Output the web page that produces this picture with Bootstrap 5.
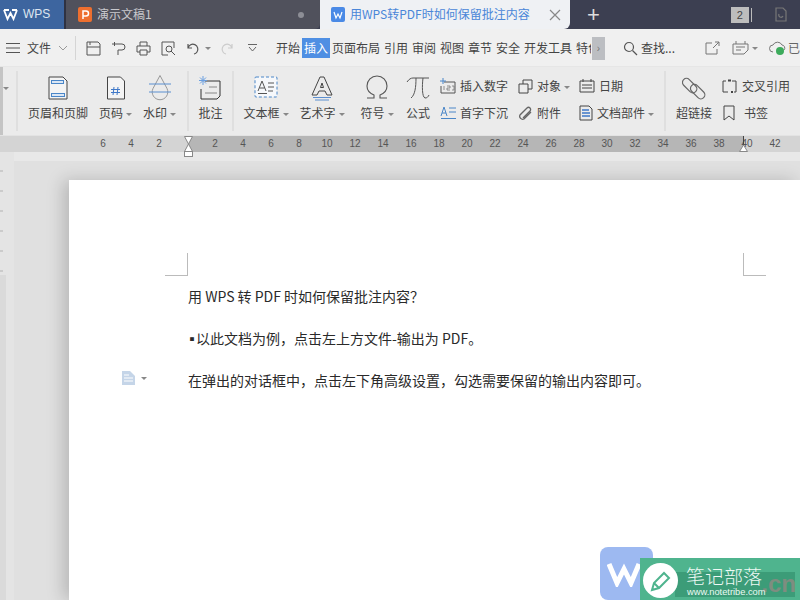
<!DOCTYPE html>
<html lang="zh">
<head>
<meta charset="utf-8">
<title>WPS</title>
<link href="https://cdn.jsdelivr.net/npm/bootstrap@5.3.0/dist/css/bootstrap.min.css" rel="stylesheet">
<style>
html,body{height:100%;overflow:hidden}
body{width:800px;height:600px;background:#e3e3e3;font-family:"Noto Sans CJK SC","Liberation Sans",sans-serif;font-size:12px;color:#444;line-height:1.2;position:relative}
svg{display:block;flex:none}
.tabbar{height:29px;background:#3c3f51;color:#d5d7de}
.tb-wps{width:64px;background:#3d659f;gap:5px;padding-left:3px;font-family:"Liberation Sans",sans-serif;font-size:12px;color:#dde5f0}
.tb-gap{width:2px;background:#2f3242}
.tb-doc{width:254px;background:#50515c;border-radius:0 0 5px 0;padding:0 16px 0 12px;gap:5px;color:#c8c8cc}
.tb-dot{width:6px;height:6px;background:#8d8e96;border-radius:50%}
.tb-active{width:250px;background:#eff1f4;color:#4a86d8;border-radius:0 0 6px 0;padding:0 9px 0 11px;gap:5px}
.tb-plus{color:#ddd;font-family:"Liberation Sans",sans-serif;font-size:22px;font-weight:400;padding-left:17px;line-height:1}
.tb-count{width:18px;height:16px;background:#bdbdbd;color:#444;font-family:"Liberation Sans",sans-serif;font-size:11px;text-align:center;line-height:16px;margin-left:131px;box-shadow:3px 0 0 -1px #3c3f51,4px 0 0 -1px #bbb}
.tb-r{margin-left:25px}
.menu{height:38px;background:#f0f0f0;padding:1px 0 0 6px;border-bottom:1px solid #e6e6e6}
.menu-file{gap:7px;width:70px;color:#444;padding-right:3px}
.menu-sep{width:1px;height:24px;background:#d5d5d5}
.qa{gap:10px;padding-left:10px;width:202px}
.qa .mi-cr{margin-left:-4px}
.qa .mi-ch{margin-left:4px}
.mi{gap:4px;color:#444}
.mi span{white-space:nowrap}
.mi-on{background:#4f8fe3;color:#fff;padding:3px 2px;margin:0 -2px}
.mi-clip{width:15px;overflow:hidden;white-space:nowrap}
.mi-more{width:13px;height:23px;background:#bcbec2;color:#777;font-family:"Liberation Sans",sans-serif;font-size:10px;text-align:center;line-height:23px;margin-left:1px}
.find{gap:3px;padding-left:18px;width:101px}
.mr{gap:12px;color:#666}
.mr-cl{margin-left:-1px}
.mr-t{margin-left:-10px}
.ribbon{height:68px;background:#ebebeb;box-shadow:inset 3px 0 0 #c4c4c4}
.rs{height:60px;margin-top:4px;border-right:2px solid #dfdfdf;gap:0}
.rs0{width:18px}
.rs1{width:171px;padding-left:9px}
.rs2{width:45px;justify-content:center}
.rs3{width:432px;padding-left:9px}
.rs4{width:134px;padding-left:9px;border-right:0}
.big{display:flex;flex-direction:column;align-items:center;height:60px;white-space:nowrap;padding-top:3px}
.big svg{height:28px;margin-bottom:4px}
.w-a{width:62px}.w-b{width:35px;margin-left:9px}.w-c{width:35px;margin-left:9px}
.w-d{width:46px}.w-e{width:46px;margin-left:10px}.w-f{width:40px;margin-left:12px}.w-g{width:26px;margin-left:8px}
.w-h{width:38px}
.two{display:flex;flex-direction:column;gap:7px;padding-top:5px;height:60px}
.two>div{display:flex;align-items:center;gap:4px;height:20px;white-space:nowrap}
.c1{width:78px;margin-left:9px}.c2{width:61px}.c3{width:80px}.c4{width:70px;margin-left:9px}
.caret{display:inline-block;width:0;height:0;border:3px solid transparent;border-top:3px solid #888;border-bottom:0;margin-left:3px;vertical-align:middle}
.ruler{height:16px;background:linear-gradient(90deg,#d4d4d4 189px,#b6b6b6 189px,#b6b6b6 744px,#d4d4d4 744px);padding-left:89px;position:relative;z-index:1;font-family:"Liberation Sans",sans-serif;font-size:10px;color:#555;margin-top:1px}
.ruler span{width:28px;flex:none;text-align:center;line-height:15px}
.m1{position:absolute;left:184px;top:0}
.m2{position:absolute;left:739px;top:0}
.work{height:448px;position:relative;padding:28px 0 0 69px;background:linear-gradient(#e0e0e0,#e0e0e0) 14px 9px no-repeat,#e8e8e8}
.vr{position:absolute;left:0;top:0;bottom:0;width:14px;background:linear-gradient(#b4b4b4,#b4b4b4) 0 123px/6px 100% no-repeat,repeating-linear-gradient(180deg,transparent 0 18px,#777 18px 20px) 0 0/3px 123px no-repeat,#dcdcdc;border-right:0}
.sheet{width:731px;height:420px;background:#fff;box-shadow:-6px 0 16px rgba(0,0,0,.18);padding:73px 0 0 119px;font-size:14px;color:#2a2a2a;position:relative}
.crn{height:23px;width:23px;margin-left:-23px;border-right:1px solid #bbb;border-bottom:1px solid #bbb;margin-bottom:9px}
.crn2{position:absolute;left:674px;top:73px;width:23px;height:23px;border-left:1px solid #bbb;border-bottom:1px solid #bbb}
.para{height:42px;line-height:22px;white-space:nowrap}
.blt{margin-left:-3px;margin-right:-3px}
.note{position:absolute;left:53px;top:191px;gap:6px}
.wm{position:absolute;right:0;bottom:0;width:200px;height:53px}
.wm-logo{position:absolute;left:0;top:0;width:53px;height:53px;background:#9db9f1;border-radius:8px;padding:0 12px 0 6px}
.wm-bar{position:absolute;left:40px;top:11px;width:160px;height:42px;background:#4fb48e;color:#fff}
.wm-circle{position:absolute;left:3px;top:5px;width:35px;height:35px;background:#fff;border-radius:50%}
.wm-band{position:absolute;left:35px;top:14px;width:120px;height:25px;background:#3c9c78}
.wm-cn{position:absolute;right:4px;top:13px;font-family:"Liberation Sans",sans-serif;font-size:24px;line-height:26px;color:#7e8d80;font-weight:700}
.wm-t{position:absolute;left:46px;top:8px;font-size:19px;line-height:19px;font-weight:300;color:#eef9f4;white-space:nowrap}
.wm-u{position:absolute;left:47px;top:29px;font-family:"Liberation Sans",sans-serif;font-size:9.300px;line-height:10px;color:#eafaf3;white-space:nowrap}
</style>
</head>
<body>
<div class="tabbar d-flex align-items-stretch">
  <div class="tb-wps d-flex align-items-center">
    <svg width="15" height="12" viewBox="0 0 15 12" fill="none" stroke="#fff" stroke-width="1.800"><path d="M1 1l3.500 9 3-6 3 6L14 1M1 1h5M9 1h5"/></svg>
    <span>WPS</span>
  </div>
  <div class="tb-gap"></div>
  <div class="tb-doc d-flex align-items-center">
    <svg width="14" height="15" viewBox="0 0 14 15"><rect width="14" height="15" rx="2" fill="#ee6f2f"/><path d="M5 12V4h3a2 2 0 010 5H5" fill="none" stroke="#fff" stroke-width="1.500"/></svg>
    <span class="flex-grow-1">演示文稿1</span>
    <i class="tb-dot"></i>
  </div>
  <div class="tb-active d-flex align-items-center">
    <svg width="14" height="15" viewBox="0 0 14 15"><rect width="14" height="15" rx="2" fill="#4a8ae6"/><path d="M3 5l2 6 2-4 2 4 2-6" fill="none" stroke="#fff" stroke-width="1.200"/></svg>
    <span class="flex-grow-1 text-nowrap">用WPS转PDF时如何保留批注内容</span>
    <svg width="12" height="12" viewBox="0 0 12 12" stroke="#888" stroke-width="1.200"><path d="M1 1l10 10M11 1L1 11"/></svg>
  </div>
  <div class="d-flex align-items-center">
    <span class="tb-plus">+</span>
    <span class="tb-count">2</span>
    <svg class="tb-r" width="14" height="15" viewBox="0 0 14 15" fill="none" stroke="#777" stroke-width="1.200"><path d="M2 1h7l3 3v10H2zM5 7a2 2 0 104 2"/></svg>
  </div>
</div>

<div class="menu d-flex align-items-center">
  <div class="menu-file d-flex align-items-center">
    <svg width="14" height="10" viewBox="0 0 14 10" stroke="#555"><path d="M0 .5h14M0 5h14M0 9.500h14"/></svg>
    <span>文件</span>
    <svg width="10" height="6" viewBox="0 0 10 6" fill="none" stroke="#999"><path d="M1 1l4 4 4-4"/></svg>
  </div>
  <div class="menu-sep"></div>
  <div class="qa d-flex align-items-center">
    <svg width="15" height="15" viewBox="0 0 15 15" fill="none" stroke="#555"><path d="M1 1h11l2 2v11H1zM1 6h13M4 1v3"/></svg>
    <svg width="15" height="15" viewBox="0 0 15 15" fill="none" stroke="#555"><path d="M1 3h5M3.500 1v4M6 3h5a3 3 0 010 6H7v5"/></svg>
    <svg width="15" height="15" viewBox="0 0 15 15" fill="none" stroke="#555"><path d="M4 5V1h7v4M4 11H1V5h13v6h-3M4 9h7v5H4z"/></svg>
    <svg width="15" height="15" viewBox="0 0 15 15" fill="none" stroke="#555"><path d="M13 7V1H1v13h6"/><circle cx="8" cy="8" r="3"/><path d="M10 10l4 4"/></svg>
    <svg width="13" height="13" viewBox="0 0 13 13" fill="none" stroke="#555" stroke-width="1.200"><path d="M2 2v4h4M2 6a5 5 0 119 4 5 5 0 01-3 2"/></svg>
    <i class="caret mi-cr"></i>
    <svg width="13" height="13" viewBox="0 0 13 13" fill="none" stroke="#ccc" stroke-width="1.200"><path d="M11 2v4H7M11 6a5 5 0 10-9 4 5 5 0 003 2"/></svg>
    <svg class="mi-ch" width="9" height="8" viewBox="0 0 9 8" fill="none" stroke="#666"><path d="M0 .5h9M1 3l3.500 4L8 3"/></svg>
  </div>
  <div class="mi d-flex align-items-center">
    <span>开始</span><span class="mi-on">插入</span><span>页面布局</span><span>引用</span><span>审阅</span><span>视图</span><span>章节</span><span>安全</span><span>开发工具</span><span class="mi-clip">特色</span>
  </div>
  <div class="mi-more">›</div>
  <div class="find d-flex align-items-center">
    <svg width="15" height="15" viewBox="0 0 15 15" fill="none" stroke="#555" stroke-width="1.200"><circle cx="6" cy="6" r="4.500"/><path d="M9.500 9.500L14 14"/></svg>
    <span class="text-nowrap">查找...</span>
  </div>
  <div class="mr d-flex align-items-center">
    <svg width="15" height="14" viewBox="0 0 15 14" fill="none" stroke="#777"><path d="M7 2H1v11h11V8M8 7l6-6M10 1h4v4"/></svg>
    <div class="d-flex align-items-center"><svg width="17" height="14" viewBox="0 0 17 14" fill="none" stroke="#777"><path d="M1 3h15v6l-4 4H1zM4 6h9M4 9h5M4 0v3M13 0v3"/></svg><i class="caret"></i></div>
    <svg class="mr-cl" width="17" height="16" viewBox="0 0 17 16" fill="none" stroke="#777"><path d="M4 12a3.500 3.500 0 010-7 5 5 0 019 0 3 3 0 012 5"/><circle cx="11" cy="11" r="4" fill="#3dab5c" stroke="none"/></svg>
    <span class="text-nowrap mr-t">已</span>
  </div>
</div>

<div class="ribbon d-flex">
  <div class="rs rs0 d-flex align-items-start"><i class="caret mt-3"></i></div>
  <div class="rs rs1 d-flex">
    <div class="big w-a"><svg width="20" height="28" viewBox="0 0 20 28" fill="none"><path d="M1 3h14l4 4v18H1z" stroke="#444" fill="#f4f4f4"/><rect x="3.500" y="6.500" width="12" height="3" fill="#dbe7f5" stroke="#4a86c8"/><rect x="3.500" y="19.500" width="13" height="3" fill="#dbe7f5" stroke="#4a86c8"/></svg><span>页眉和页脚</span></div>
    <div class="big w-b"><svg width="20" height="28" viewBox="0 0 20 28" fill="none"><path d="M1.500 3h13l4 4v18h-17z" stroke="#444" fill="#f4f4f4"/><path d="M8 13l-1 8M12 13l-1 8M5 15.500h9M5 18.500h9" stroke="#3f78c8"/></svg><span>页码<i class="caret"></i></span></div>
    <div class="big w-c"><svg width="24" height="28" viewBox="0 0 24 28" fill="none"><path d="M12 1.500l7 13a7.800 7.800 0 11-14 0z" stroke="#999"/><path d="M1 10h22M1 18h22" stroke="#5b8fd0"/></svg><span>水印<i class="caret"></i></span></div>
  </div>
  <div class="rs rs2 d-flex">
    <div class="big"><svg width="24" height="28" viewBox="0 0 24 28" fill="none"><path d="M7 7h15v15l-3 3H3V15" stroke="#333"/><path d="M11 13h8M7 19h12" stroke="#888"/><path d="M5 2v9M1 6.500h8M2 3.500l6 6M8 3.500l-6 6" stroke="#6b9fe0"/></svg><span>批注</span></div>
  </div>
  <div class="rs rs3 d-flex">
    <div class="big w-d"><svg width="24" height="28" viewBox="0 0 24 28" fill="none"><rect x="1" y="3" width="22" height="20" rx="1" fill="#f6f8fb" stroke="#4a86c8" stroke-dasharray="3 2"/><path d="M4 17l4-10 4 10M5.500 14h5M14 9h6M14 13h6M14 17h5M4 19.500h9" stroke="#555"/></svg><span>文本框<i class="caret"></i></span></div>
    <div class="big w-e"><svg width="22" height="28" viewBox="0 0 22 28" fill="none" stroke="#444"><path d="M1 21L9 3h4l8 18h-5l-2-4H8l-2 4z"/><path d="M9.500 13.500L11 9l1.500 4.500z"/><path d="M2 23.500h18M4 26h14" stroke="#5b8fd0"/></svg><span>艺术字<i class="caret"></i></span></div>
    <div class="big w-f"><svg width="24" height="28" viewBox="0 0 24 28" fill="none" stroke="#555" stroke-width="1.100"><path d="M2 24h7v-3C4 19 2 16 2 12a10 10 0 0120 0c0 4-2 7-7 9v3h7"/></svg><span>符号<i class="caret"></i></span></div>
    <div class="big w-g"><svg width="24" height="28" viewBox="0 0 24 28" fill="none" stroke="#555" stroke-width="1"><path d="M1 8c2-3 4-4 6-4h16M10 4c0 9-1 17-5 20M17 4c-1 8-1 19 2 20 2 0 3-1 4-3"/></svg><span>公式</span></div>
    <div class="two c1">
      <div><svg width="16" height="16" viewBox="0 0 16 16" fill="none"><path d="M4 4h11v11H1V8" stroke="#555"/><path d="M3 0v6M0 3h6" stroke="#4a86c8"/><path d="M4 8v4M7 8h3v2H7v2h3M12 8h2v4h-2" stroke="#777" stroke-width=".8"/></svg><span>插入数字</span></div>
      <div><svg width="16" height="14" viewBox="0 0 16 14" fill="none"><path d="M1 10l3-9 3 9M2 7h4" stroke="#4a86c8"/><path d="M9 2h7M9 6h7M1 12.500h15" stroke="#4a86c8"/></svg><span>首字下沉</span></div>
    </div>
    <div class="two c2">
      <div><svg width="15" height="15" viewBox="0 0 15 15" fill="none" stroke="#444"><path d="M5 5V1h9v9h-4M1 5h9v9H1z"/></svg><span>对象<i class="caret"></i></span></div>
      <div><svg width="15" height="15" viewBox="0 0 15 15" fill="none" stroke="#666" stroke-width="1.300"><path d="M13 6l-7 7a3 3 0 01-4-4l7-7a2 2 0 013 3L5 12"/></svg><span>附件</span></div>
    </div>
    <div class="two c3">
      <div><svg width="16" height="14" viewBox="0 0 16 14" fill="none" stroke="#444"><path d="M1 2h14v11H1zM4 0v3M12 0v3M3 6h10M3 9h10"/></svg><span>日期</span></div>
      <div><svg width="14" height="16" viewBox="0 0 14 16" fill="none"><path d="M1 1h9l3 3v11H1z" stroke="#444"/><path d="M3 5h7M3 8h8M3 11h8" stroke="#3f78c8" stroke-width="1.500"/></svg><span>文档部件<i class="caret"></i></span></div>
    </div>
  </div>
  <div class="rs rs4 d-flex">
    <div class="big w-h"><svg width="24" height="28" viewBox="0 0 24 28" fill="none" stroke="#666" stroke-width="1.200"><rect x="-1" y="8" width="17" height="8" rx="4" transform="rotate(45 8 12)"/><rect x="7" y="14" width="17" height="8" rx="4" transform="rotate(45 16 18)"/></svg><span>超链接</span></div>
    <div class="two c4">
      <div><svg width="16" height="15" viewBox="0 0 16 15" fill="none" stroke="#444"><path d="M4 2H1v11h5M10 2h4v11h-2"/><path d="M6 1.500h3M9 13h2" stroke-width="2"/></svg><span>交叉引用</span></div>
      <div><svg width="14" height="16" viewBox="0 0 14 16" fill="none" stroke="#444"><path d="M2 1h10v14l-5-4-5 4z"/></svg><span class="ms-1">书签</span></div>
    </div>
  </div>
</div>

<div class="ruler d-flex">
  <span>6</span><span>4</span><span>2</span><span></span><span>2</span><span>4</span><span>6</span><span>8</span><span>10</span><span>12</span><span>14</span><span>16</span><span>18</span><span>20</span><span>22</span><span>24</span><span>26</span><span>28</span><span>30</span><span>32</span><span>34</span><span>36</span><span>38</span><span>40</span><span>42</span>
  <svg class="m1" width="9" height="21" viewBox="0 0 9 21"><path d="M.5.500h8L4.500 8l4 7.500h-8L4.500 8z" fill="#fff" stroke="#888"/><rect x=".5" y="15.500" width="8" height="5" fill="#fff" stroke="#888"/></svg>
  <svg class="m2" width="9" height="16" viewBox="0 0 9 16"><path d="M4.500 0v8" stroke="#444"/><path d="M.5 15.500L4.500 9l4 6.500z" fill="#fff" stroke="#888"/></svg>
</div>

<div class="work">
  <div class="vr"></div>
  <div class="sheet">
    <div class="crn"></div>
    <div class="crn2"></div>
    <div class="para">用 WPS 转 PDF 时如何保留批注内容？</div>
    <div class="para"><span class="blt">▪</span>以此文档为例，点击左上方文件-输出为 PDF。</div>
    <div class="para">在弹出的对话框中，点击左下角高级设置，勾选需要保留的输出内容即可。</div>
    <div class="note d-flex align-items-center">
      <svg width="13" height="14" viewBox="0 0 13 14"><path d="M0 0h8l5 5v9H0z" fill="#c5d5e8"/><path d="M2 4h5M2 7h9M2 10h9" stroke="#fff"/></svg>
      <i class="caret m-0"></i>
    </div>
  </div>
</div>

<div class="wm">
  <div class="wm-logo d-flex align-items-center justify-content-center"><svg width="34" height="26" viewBox="0 0 34 26" fill="none" stroke="#fff" stroke-width="5"><path d="M2 3l8 19 7-14 7 14 8-19"/></svg></div>
  <div class="wm-bar">
    <div class="wm-band"></div>
    <div class="wm-cn">.cn</div>
    <div class="wm-circle d-flex align-items-center justify-content-center"><svg width="22" height="22" viewBox="0 0 22 22" fill="none" stroke="#4fb48e" stroke-width="2"><path d="M2 20l2-7L14 3l5 5L9 18zM4 13l5 5"/></svg></div>
    <div class="wm-t">笔记部落</div>
    <div class="wm-u">www.notetribe.com</div>
  </div>
</div>
</body>
</html>
